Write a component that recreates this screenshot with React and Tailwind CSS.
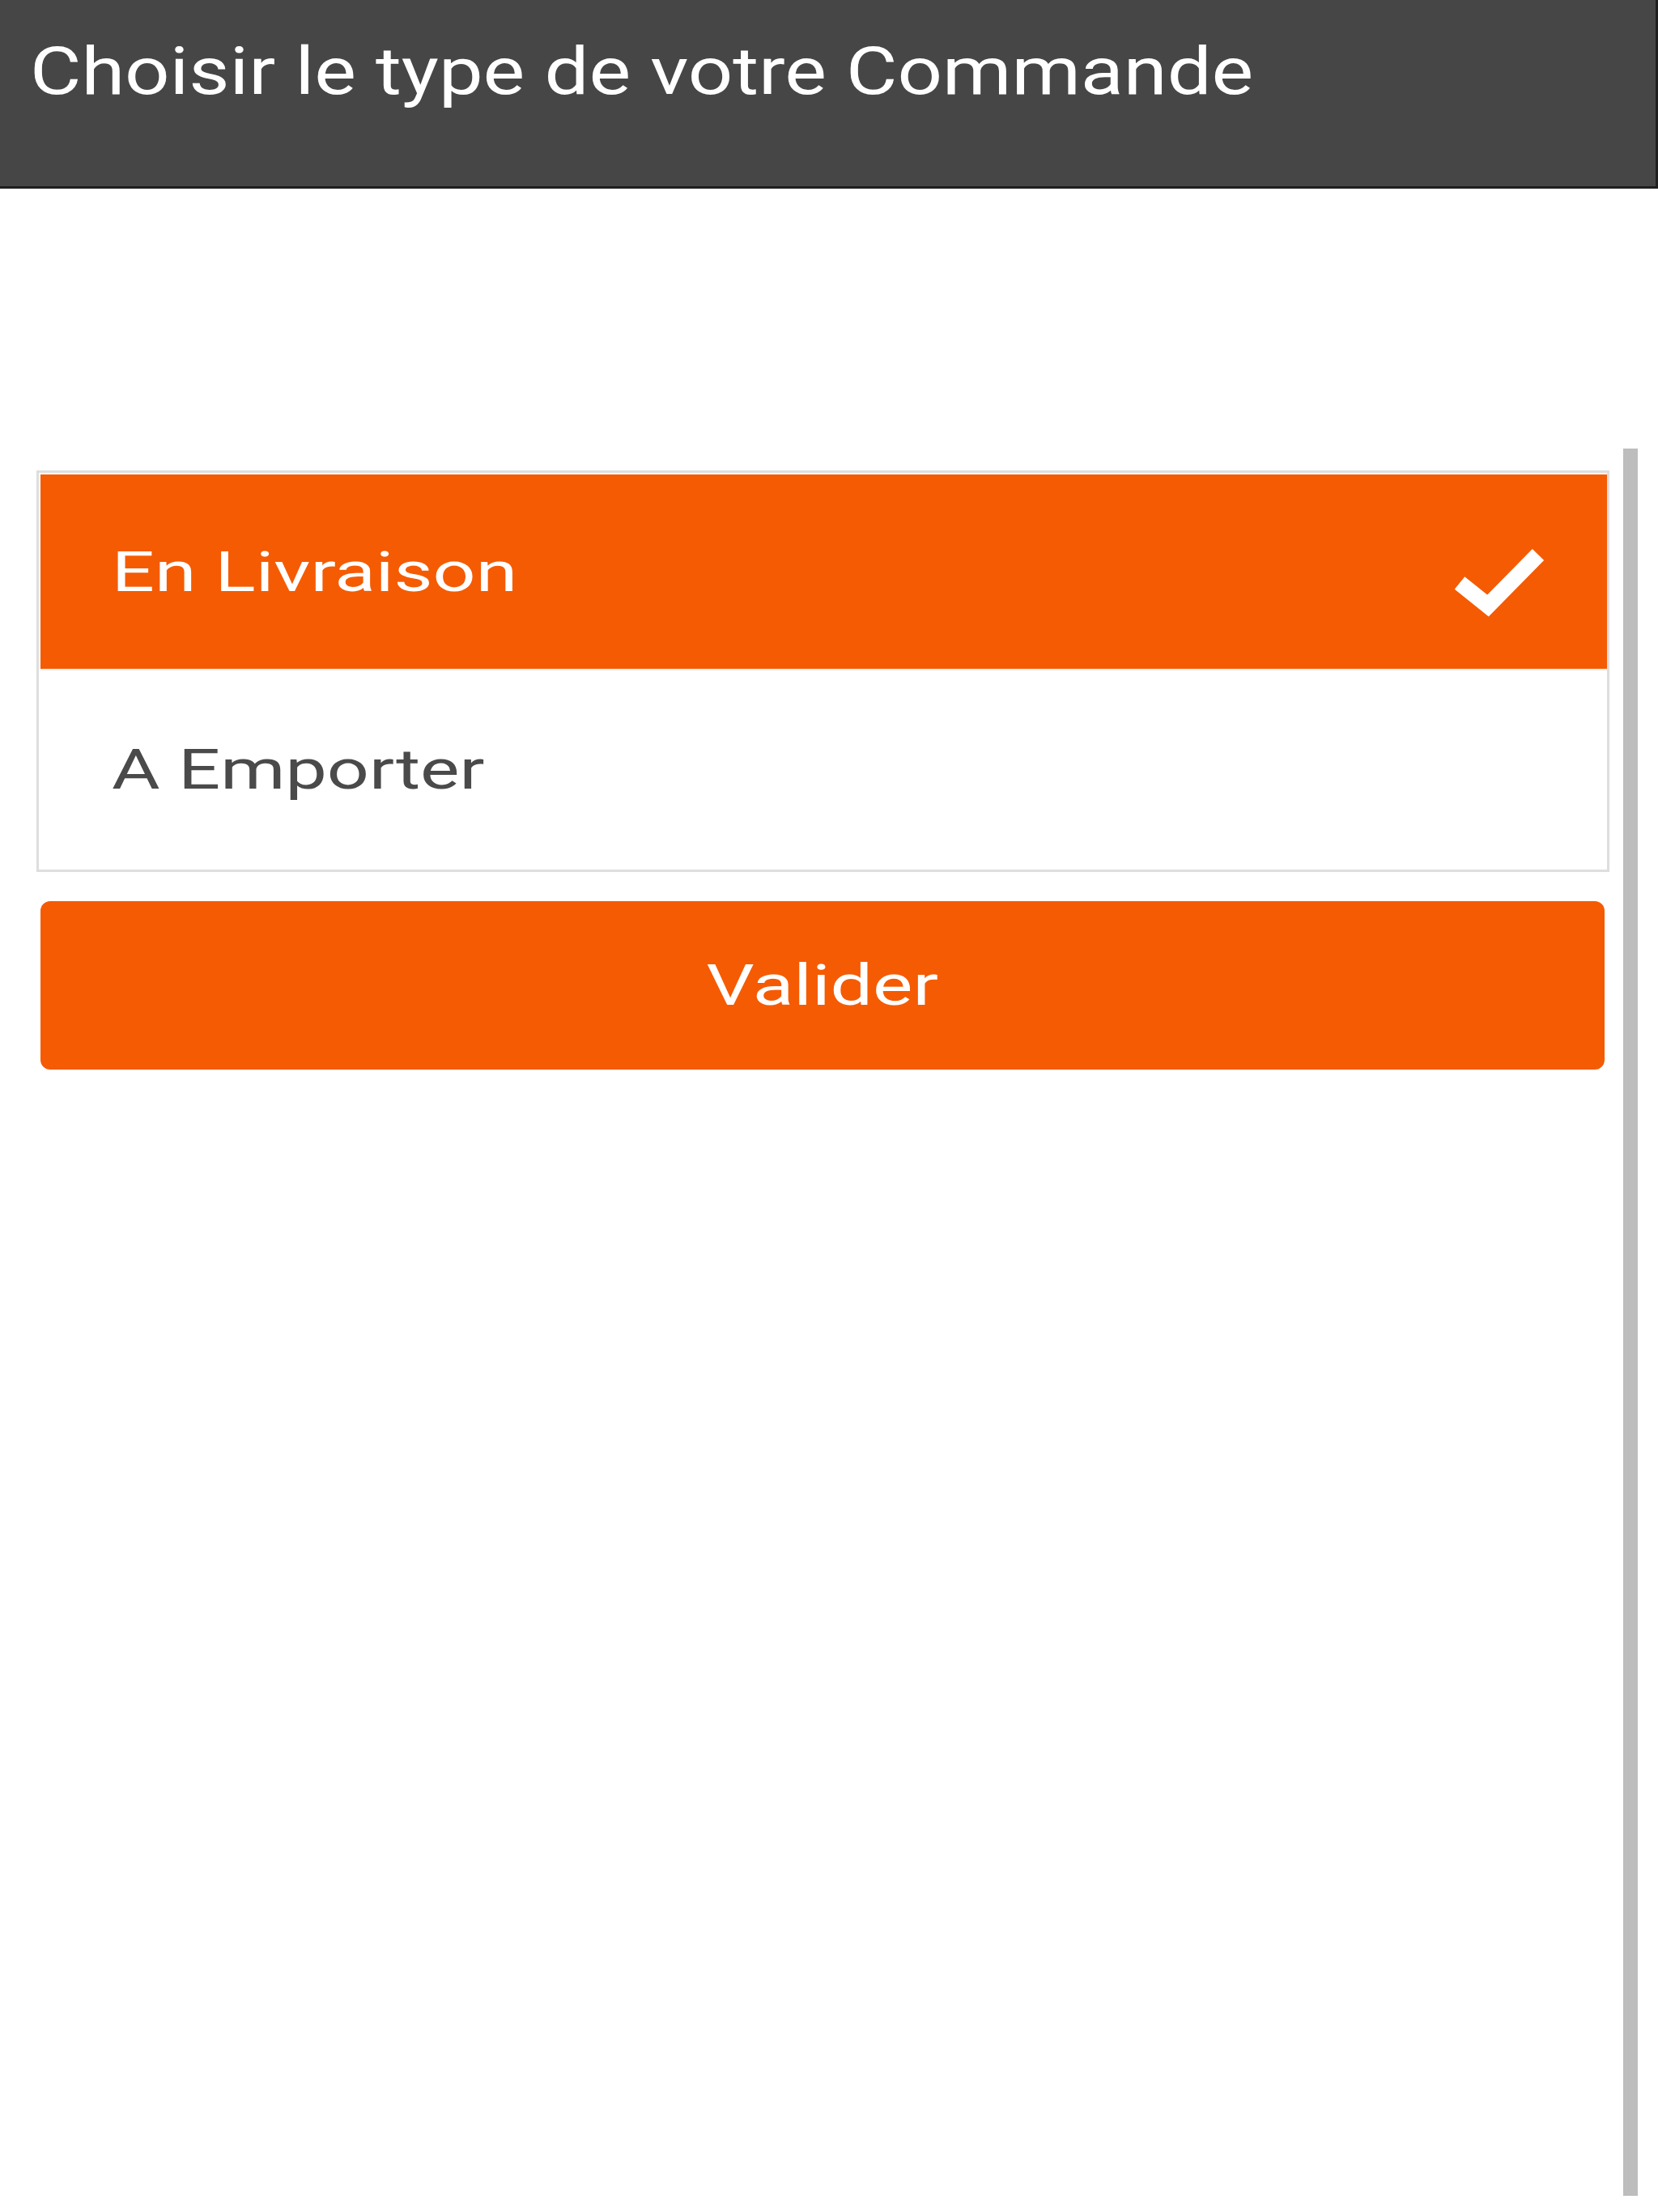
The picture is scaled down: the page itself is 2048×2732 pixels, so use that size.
import { useState } from 'react';

const options = [
  { id: 'livraison', label: 'En Livraison', stretch: 'scale-x-[1.35]' },
  { id: 'emporter', label: 'A Emporter', stretch: 'scale-x-[1.325]' },
];

function CheckIcon() {
  return (
    <svg width="120" height="90" viewBox="0 0 120 90" className="mt-[28px] shrink-0">
      <polyline
        points="11,45 46,73 108,10"
        fill="none"
        stroke="#ffffff"
        strokeWidth="20"
        strokeLinecap="butt"
        strokeLinejoin="miter"
      />
    </svg>
  );
}

export default function App() {
  const [selected, setSelected] = useState('livraison');

  return (
    <div className="relative w-[2048px] h-[2732px] bg-white font-['Roboto',sans-serif] overflow-hidden">
      <header className="h-[233px] bg-[#464646] border-b-[3px] border-r-[3px] border-[#1f1f1f] pl-[37px] pt-[47px]">
        <h1 className="inline-block origin-left scale-x-[1.188] text-[82px] leading-none text-white whitespace-nowrap">
          Choisir le type de votre Commande
        </h1>
      </header>

      <main className="pl-[45px] pr-[60px] pt-[348px]">
        <div className="border-[3px] border-[#dedede] p-[2px] pr-0">
          {options.map((opt) => {
            const active = selected === opt.id;
            return (
              <button
                key={opt.id}
                type="button"
                onClick={() => setSelected(opt.id)}
                className={
                  active
                    ? 'flex w-full h-[240px] items-center justify-between bg-[#f55b03] pl-[88px] pr-[73px] text-white'
                    : 'flex w-full h-[246px] items-center justify-between bg-white border-t-[2px] border-[#ececec] pl-[88px] pr-[73px] text-[#4a4a4a]'
                }
              >
                <span className={`inline-block origin-left ${opt.stretch} text-[69px] leading-none whitespace-nowrap`}>
                  {opt.label}
                </span>
                {active && <CheckIcon />}
              </button>
            );
          })}
        </div>

        <button
          type="button"
          className="mt-[36px] ml-[5px] flex h-[208px] w-[1932px] items-center justify-center rounded-[12px] bg-[#f55b03] text-white"
        >
          <span className="inline-block scale-x-[1.33] text-[70px] leading-none">Valider</span>
        </button>
      </main>

      {/* scroll indicator */}
      <div className="absolute left-[2005px] top-[554px] h-[2158px] w-[18px] bg-[#bdbdbd]" />
    </div>
  );
}
